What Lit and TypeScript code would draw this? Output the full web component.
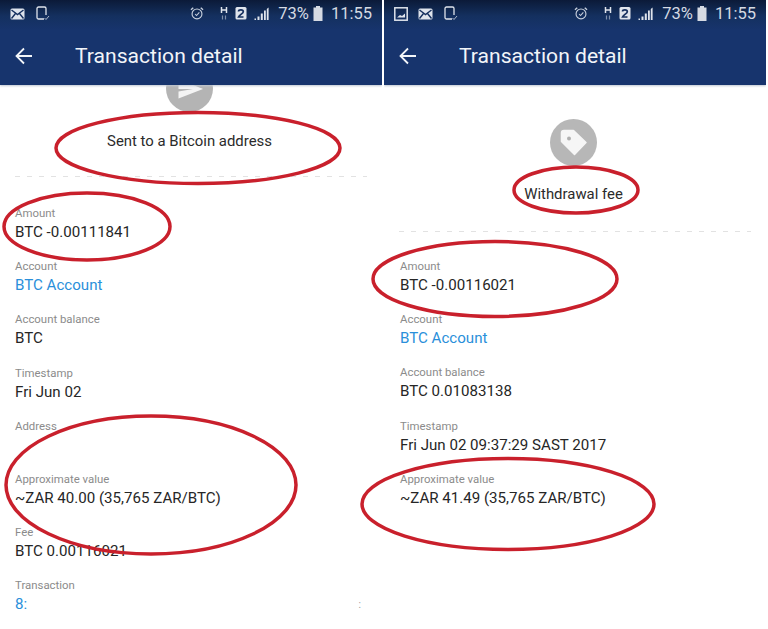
import { LitElement, html, css, svg } from "lit";
import { customElement, property } from "lit/decorators.js";

type Row = { label: string; value: string; link?: boolean; extra?: string };

const mail = svg`<svg width="15" height="12" viewBox="0 0 15 12"><rect x="0.5" y="0.5" width="14" height="11" rx="1.5" fill="#dfe4ec"/><path d="M1.5 2 7.5 6.5 13.5 2M1.5 10.5 5.5 5.5M13.5 10.5 9.5 5.5" stroke="#16305f" stroke-width="1.4" fill="none"/></svg>`;
const phoneCheck = svg`<svg width="15" height="15" viewBox="0 0 15 15"><path d="M9 13H3.5A1.5 1.5 0 0 1 2 11.5V2.500A1.500 1.500 0 0 1 3.500 1h6A1.500 1.500 0 0 1 11 2.500V9" stroke="#dfe4ec" stroke-width="1.300" fill="none"/><path d="M9.500 12 11 13.500 14 10" stroke="#aab5c8" stroke-width="1" fill="none"/></svg>`;
const picture = svg`<svg width="14" height="14" viewBox="0 0 14 14"><rect x="0.800" y="0.800" width="12.400" height="12.400" stroke="#dfe4ec" stroke-width="1.500" fill="none"/><path d="M3 10.500 6 8l2 1 3-2.500v4z" fill="#dfe4ec"/></svg>`;
const alarm = svg`<svg width="14" height="15" viewBox="0 0 15 15"><circle cx="7.500" cy="8" r="5.300" stroke="#c9d1de" stroke-width="1.200" fill="none"/><path d="M5.500 8 7 9.700 10 6.300" stroke="#c9d1de" stroke-width="1.100" fill="none"/><path d="M1 3.500 3.500 1.300M14 3.500 11.500 1.300" stroke="#c9d1de" stroke-width="1.400"/></svg>`;
const hNet = svg`<svg width="8" height="15" viewBox="0 0 8 15"><path d="M1.500 1v6M6.500 1v6M1.500 4h5" stroke="#dfe4ec" stroke-width="1.500" fill="none"/><path d="M2.500 9.500v4M5.500 9.500v4" stroke="#7f8fab" stroke-width="1.200"/></svg>`;
const sim = svg`<svg width="12" height="13" viewBox="0 0 12 13"><rect width="11" height="12.500" x="0.500" rx="1.500" fill="#dfe4ec"/><path d="M3.500 4.500C3.700 2.300 8.300 2.300 8.300 4.700 8.300 6.500 4.500 7.500 3.500 10H8.500" stroke="#16305f" stroke-width="1.700" fill="none"/></svg>`;
const signal = svg`<svg width="15" height="14" viewBox="0 0 15 14"><path d="M0.500 13h1.500v-1.500H.5zM3.500 13H5.500V9.500H3.500zM6.800 13h2V6.500h-2zM10 13h1.800V3.500H10zM12.800 13h1.800V.5l-1.800 1.500z" fill="#dfe4ec"/></svg>`;
const battery = svg`<svg width="10" height="15" viewBox="0 0 10 15"><path d="M3 0h4v1.500h2.500V15H.5V1.500H3z" fill="#d5dae3"/></svg>`;
const back = svg`<svg width="18" height="18" viewBox="0 0 18 18"><path d="M17 9H2M9 1.500 1.500 9 9 16.500" stroke="#f2f5f9" stroke-width="1.800" fill="none"/></svg>`;
const sendIcon = svg`<svg width="47" height="47" viewBox="0 0 47 47"><circle cx="23.500" cy="23.500" r="23.500" fill="#b4b4b4"/><path d="M12.500 20.500 37 24 12.500 33.500 12.500 26.500 27 24 12.500 20.500Z" fill="#f4f4f4"/><path d="M12.500 14 37 24 12.500 24Z" fill="#f4f4f4"/></svg>`;
const tagIcon = svg`<svg width="47" height="47" viewBox="0 0 47 47"><circle cx="23.500" cy="23.500" r="23.500" fill="#b7b7b7"/><path d="M14 11.500H23.500L36 23.500 24.500 35.500 11.500 22.500V14A2.500 2.500 0 0 1 14 11.500Z" fill="#f6f6f6" stroke="#f6f6f6" stroke-width="1.500" stroke-linejoin="round"/><circle cx="19" cy="19.500" r="2" fill="#b0b0b0"/></svg>`;

@customElement("detail-panel")
class DetailPanel extends LitElement {
  @property({ type: Boolean }) withPicture = false;
  @property({ type: Boolean }) raised = false;
  @property() title = "";
  @property({ attribute: false }) rows: Row[] = [];

  static styles = css`
    :host { display: block; width: 382px; height: 629px; overflow: hidden; background: #fff; font-family: Roboto, "Liberation Sans", sans-serif; }
    .head { height: 85px; background: linear-gradient(#0b1a38 0, #14305f 16px, #17346d 30px, #17346d 100%); box-shadow: 0 1px 2px #bfc6d2; display: flex; flex-direction: column; position: relative; }
    .status { height: 27px; display: flex; align-items: center; color: #d5dae3; padding: 0 10px 0 10px; }
    .left { display: flex; align-items: center; gap: 10px; flex: 1; }
    .right { display: flex; align-items: center; }
    .pct { font-size: 16.500px; margin-left: 9px; margin-right: 4px; }
    .time { font-size: 16.500px; margin-left: 8px; }
    .alarm { margin-right: 16px; display: flex; }
    .hnet { margin-right: 7px; display: flex; }
    .sim { margin-right: 7px; display: flex; }
    .bar { display: flex; align-items: center; padding: 1px 0 0 15px; height: 56px; box-sizing: border-box; }
    .bar-title { margin-left: 42px; font-size: 21.100px; color: #f2f5f9; }
    .hero { height: 146px; display: flex; flex-direction: column; align-items: center; box-sizing: border-box; padding: 34px 3px 0 0; }
    .hero.raised { padding-top: 0; height: 91px; }
    .hero.raised svg { margin-top: -20px; }
    .event { font-size: 14.900px; color: #2b2b2b; margin-top: 19px; }
    .raised .event { margin-top: 20px; }
    .dash { height: 1px; margin: 0 15px 0 15px; background: repeating-linear-gradient(90deg, #e2e2e2 0 5px, transparent 5px 12px); }
    .rows { padding: 29px 0 0 15px; }
    .rows.shifted { padding: 28px 0 0 16px; }
    .rows.tall { padding-top: 30px; }
    .row { height: 53.200px; }
    .label { font-size: 11.400px; line-height: 13px; color: #8b8b8b; }
    .value { font-size: 15.100px; line-height: 19px; margin-top: 3px; color: #262626; white-space: nowrap; display: flex; width: 346px; justify-content: space-between; }
    .value.link { color: #2a8fda; }
    .extra { color: #9a9a9a; font-size: 10px; }
  `;

  render() {
    const sendHero = this.raised;
    return html`
      <div class="head">
        <div class="status">
          <div class="left">${this.withPicture ? picture : ""}${mail}${phoneCheck}</div>
          <div class="right">
            <span class="alarm">${alarm}</span><span class="hnet">${hNet}</span><span class="sim">${sim}</span>${signal}<span class="pct">73%</span>${battery}<span class="time">11:55</span>
          </div>
        </div>
        <div class="bar">${back}<span class="bar-title">Transaction detail</span></div>
      </div>
      <div class="hero ${sendHero ? "raised" : ""}">
        ${sendHero ? sendIcon : tagIcon}
        <div class="event">${this.title}</div>
      </div>
      <div class="dash"></div>
      <div class="rows ${sendHero ? "tall" : "shifted"}">
        ${this.rows.map(
          (r) => html`<div class="row">
            <div class="label">${r.label}</div>
            <div class="value ${r.link ? "link" : ""}"><span>${r.value}</span>${r.extra ? html`<span class="extra">${r.extra}</span>` : ""}</div>
          </div>`
        )}
      </div>
    `;
  }
}

const leftRows: Row[] = [
  { label: "Amount", value: "BTC -0.00111841" },
  { label: "Account", value: "BTC Account", link: true },
  { label: "Account balance", value: "BTC" },
  { label: "Timestamp", value: "Fri Jun 02" },
  { label: "Address", value: "" },
  { label: "Approximate value", value: "~ZAR 40.00 (35,765 ZAR/BTC)" },
  { label: "Fee", value: "BTC 0.00116021" },
  { label: "Transaction", value: "8:", link: true, extra: ":" },
];
const rightRows: Row[] = [
  { label: "Amount", value: "BTC -0.00116021" },
  { label: "Account", value: "BTC Account", link: true },
  { label: "Account balance", value: "BTC 0.01083138" },
  { label: "Timestamp", value: "Fri Jun 02 09:37:29 SAST 2017" },
  { label: "Approximate value", value: "~ZAR 41.49 (35,765 ZAR/BTC)" },
];

@customElement("app-root")
class AppRoot extends LitElement {
  static styles = css`
    :host { display: block; width: 768px; height: 629px; position: relative; overflow: hidden; background: #fff; }
    .panels { display: flex; gap: 2px; }
    .marks { position: absolute; left: 0; top: 0; pointer-events: none; }
    ellipse { fill: none; stroke: #c9202c; stroke-width: 3.500; }
  `;
  render() {
    return html`
      <div class="panels">
        <detail-panel raised title="Sent to a Bitcoin address" .rows=${leftRows}></detail-panel>
        <detail-panel withPicture title="Withdrawal fee" .rows=${rightRows}></detail-panel>
      </div>
      <svg class="marks" width="768" height="629" viewBox="0 0 768 629">
        <ellipse cx="198" cy="148" rx="142" ry="35.500"></ellipse>
        <ellipse cx="87" cy="226.500" rx="83" ry="33.500"></ellipse>
        <ellipse cx="151" cy="485" rx="145" ry="69"></ellipse>
        <ellipse cx="576" cy="190" rx="62" ry="23"></ellipse>
        <ellipse cx="495" cy="279" rx="122" ry="37.500"></ellipse>
        <ellipse cx="508" cy="504" rx="146" ry="45.500"></ellipse>
      </svg>
    `;
  }
}
